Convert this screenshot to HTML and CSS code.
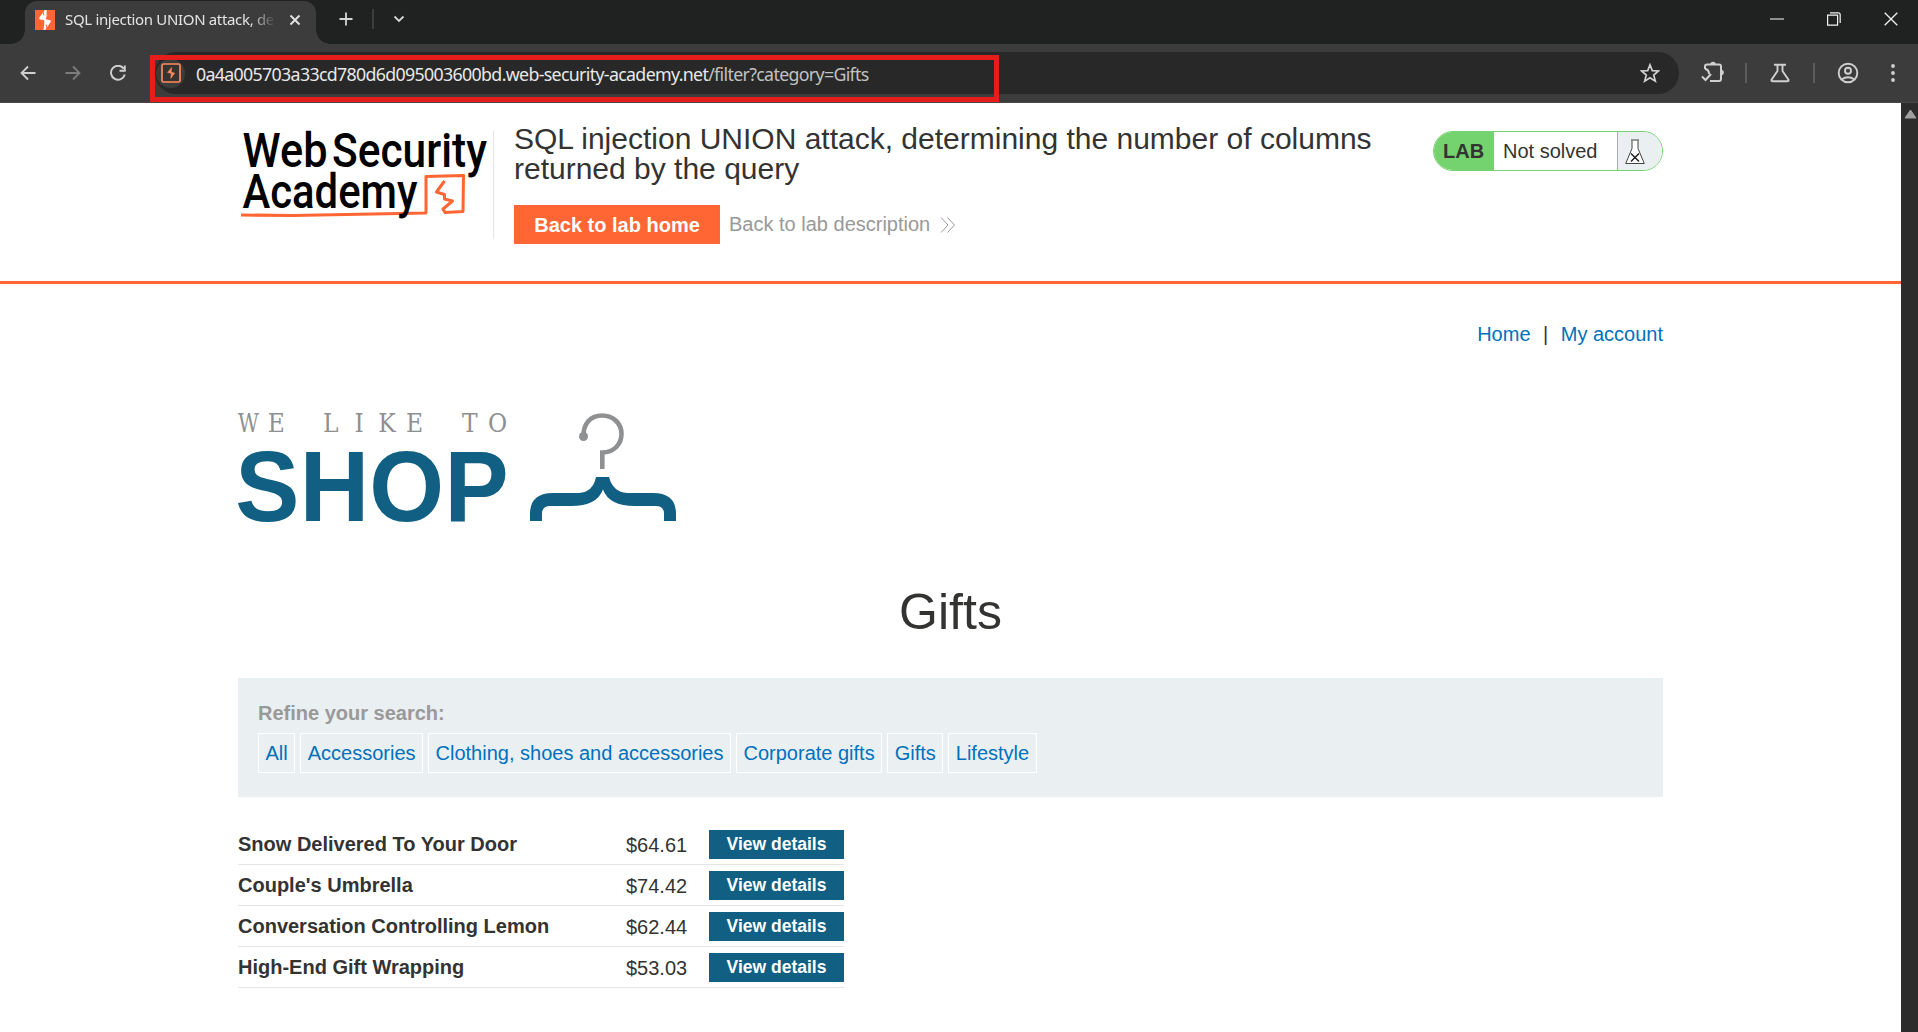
FILE: index.html
```html
<!DOCTYPE html>
<html lang="en">
<head>
<meta charset="utf-8">
<title>SQL injection UNION attack, determining the number of columns returned by the query</title>
<link rel="stylesheet" href="styles.css">
</head>
<body>
<div class="browser">
  <div class="tabstrip">
    <div class="tab">
      <svg class="favicon" width="20" height="20" viewBox="0 0 20 20"><rect width="20" height="20" fill="#f63"/><path d="M9.800 0 4.300 7.500v1.700l5 1v3l-.8 6.800h1.800l5.400-8.200v-1.600l-5-1 .9-3V0z" fill="#fff"/><path d="M7.500 0 9 5.500M12.500 20 11 14.500" stroke="#f63" stroke-width="1"/></svg>
      <span class="tab-title">SQL injection UNION attack, determining</span>
      <svg class="tab-close" width="12" height="12" viewBox="0 0 12 12"><path d="m1.500 1.500 9 9m0-9-9 9" stroke="#e3e3e3" stroke-width="1.900"/></svg>
    </div>
    <svg class="new-tab" width="14" height="14" viewBox="0 0 14 14"><path d="M7 .5v13M.5 7h13" stroke="#d5d5d5" stroke-width="1.800"/></svg>
    <span class="strip-line"></span>
    <svg class="tab-menu" width="12" height="8" viewBox="0 0 12 8"><path d="m1.500 1.500 4.500 4.500 4.500-4.500" stroke="#d5d5d5" stroke-width="1.800" fill="none"/></svg>
    <div class="window-buttons">
      <svg width="14" height="14" viewBox="0 0 14 14"><path d="M0 7h14" stroke="#aaa" stroke-width="1.600"/></svg>
      <svg width="14" height="14" viewBox="0 0 14 14"><path d="M.6 3.200h10v10H.6zM3 .8h8.200q2 0 2 2V11" stroke="#f2f2f2" stroke-width="1.200" fill="none"/></svg>
      <svg width="14" height="14" viewBox="0 0 14 14"><path d="m.7.700 12.600 12.600m0-12.600L.7 13.300" stroke="#f2f2f2" stroke-width="1.300"/></svg>
    </div>
  </div>
  <div class="toolbar">
    <svg class="back" width="16" height="16" viewBox="0 0 16 16"><path d="M15.500 8H2M8 1.500 1.500 8 8 14.500" stroke="#d0d0d0" stroke-width="1.800" fill="none"/></svg>
    <svg class="forward" width="16" height="16" viewBox="0 0 16 16"><path d="M.5 8H14M8 1.500 14.500 8 8 14.500" stroke="#7c7c7c" stroke-width="1.800" fill="none"/></svg>
    <svg class="reload" width="16" height="16" viewBox="0 0 16 16"><path d="M13.700 3.600A7 7 0 1 0 14.800 9.500M14.800.5v5.300H9.500" stroke="#d0d0d0" stroke-width="1.900" fill="none"/></svg>
    <div class="omnibox">
      <span class="site-icon"><svg width="20" height="20" viewBox="0 0 20 20"><rect x="1" y="1" width="18" height="18" rx="1.500" fill="#363331" stroke="#ff8a5c" stroke-width="1.700"/><path d="M10.700 4.500 6.500 9.500l3.800 1-.6 5 4-5.300-3.500-1.200z" fill="#ff8a5c" stroke="#ff8a5c" stroke-width=".5"/></svg></span>
      <span class="url"><span class="host">0a4a005703a33cd780d6d095003600bd.web-security-academy.net</span><span class="path">/filter?category=Gifts</span></span>
      <svg class="star" width="20" height="20" viewBox="0 0 20 20"><path d="m10 1.800 2.300 5.800 6.200.4-4.800 4 1.600 6.100-5.300-3.400-5.300 3.400 1.600-6.100-4.800-4 6.200-.4z" stroke="#d0d0d0" stroke-width="1.700" fill="none"/></svg>
    </div>
    <svg class="extensions" width="24" height="22" viewBox="0 0 24 22"><path d="M4 8V5.500q0-2 2-2h12q2 0 2 2v12.500q0 2-2 2H9M4 8q4 .5 4 5" fill="none" stroke="#d0d0d0" stroke-width="2"/><path d="M9.200 3.500a2.800 2.800 0 0 1 5.600 0zM20 8.700a2.800 2.800 0 0 1 0 5.600z" fill="#d0d0d0"/><path d="m1 15.500 3.500 3.500L10 13" fill="none" stroke="#d0d0d0" stroke-width="2"/></svg>
    <span class="tool-line"></span>
    <svg class="labs" width="20" height="20" viewBox="0 0 20 20"><path d="M4 1.700h12M7.500 2v6L1.700 16.500q-.8 1.800 1 1.800h14.600q1.800 0 1-1.800L12.500 8V2" stroke="#d0d0d0" stroke-width="1.900" fill="none"/></svg>
    <span class="tool-line second"></span>
    <svg class="profile" width="22" height="22" viewBox="0 0 22 22"><g stroke="#d0d0d0" stroke-width="1.900" fill="none"><circle cx="11" cy="11" r="9.300"/><circle cx="11" cy="8.700" r="3"/><path d="M4.500 17.500q6.500-4.500 13 0"/></g></svg>
    <svg class="more" width="4" height="18" viewBox="0 0 4 18"><g fill="#d0d0d0"><circle cx="2" cy="2" r="1.900"/><circle cx="2" cy="9" r="1.900"/><circle cx="2" cy="16" r="1.900"/></g></svg>
    <div class="highlight"></div>
  </div>
</div>
<div class="viewport">
  <div class="page">
    <header class="lab-header">
      <div class="container header-row">
        <svg class="academy" width="255" height="90" viewBox="0 0 255 90">
          <g class="academy-text">
            <text x="4.500" y="36" textLength="85" lengthAdjust="spacingAndGlyphs">Web</text>
            <text x="94" y="36" textLength="155" lengthAdjust="spacingAndGlyphs">Security</text>
          </g>
          <path d="M3 84 55 84.500 188 82V45.500L225.500 44.500 225 80.500 207 81.500 205 78 214.500 70 206.500 68V63.500L198.500 61 206.500 50" class="sketch"/>
          <g class="academy-text"><text x="4.500" y="77" textLength="175" lengthAdjust="spacingAndGlyphs">Academy</text></g>
        </svg>
        <div class="title-area">
          <h2>SQL injection UNION attack, determining the number of columns returned by the query</h2>
          <div class="actions">
            <a class="home-button">Back to lab home</a>
            <a class="description">Back to lab description <svg width="16" height="16" viewBox="0 0 16 16"><path d="m1 .5 7 7.500-7 7.500m6.500-15 7 7.500-7 7.500" fill="none" stroke="#999" stroke-width="1"/></svg></a>
          </div>
        </div>
        <div class="status">
          <b>LAB</b><span>Not solved</span>
          <i><svg width="20" height="26" viewBox="0 0 20 26"><path d="M6 1h8M7 1.500v8L.7 24.500h18.600L13 9.500v-8" fill="#fff" stroke="#444" stroke-width="1"/><path d="m6 14.500 8 8m0-8-8 8" stroke="#222" stroke-width="1.500"/></svg></i>
        </div>
      </div>
    </header>
    <main class="container">
      <nav><a>Home</a><span>|</span><a>My account</a></nav>
      <svg class="shop" width="440" height="120" viewBox="0 0 440 120">
        <text class="like" transform="translate(10.500 22) scale(.78 1)">W</text>
        <g transform="translate(0 22) scale(.9 1)"><text class="like" y="0" x="42.500 103 134.500 165.500 196.200 257.700 288.500">ELIKETO</text></g>
        <text class="word" transform="translate(-2.700 111.300) scale(.952 1)" textLength="287">SHOP</text>
        <circle cx="345.500" cy="26.500" r="4.500" fill="#8f9091"/>
        <path d="M345.500 27C345 13 353 5.500 364 5.500C376 5.500 383.500 14 383.500 24C383.500 34 376 42.500 364.300 42.500V59" fill="none" stroke="#8f9091" stroke-width="4.600"/>
        <path d="M358 67H371Q375 82 389 83H413Q438 82 438 104V111H426V104Q426 96 418 96H397Q371 96 365 79.500Q359 96 333 96H312Q304 96 304 104V111H292V104Q292 82 317 83H341Q355 82 358 67Z" fill="#115f83"/>
      </svg>
      <h1>Gifts</h1>
      <section class="filters">
        <label>Refine your search:</label>
        <div class="chips"><a>All</a><a>Accessories</a><a>Clothing, shoes and accessories</a><a>Corporate gifts</a><a>Gifts</a><a>Lifestyle</a></div>
      </section>
      <section class="products">
        <div class="product"><b>Snow Delivered To Your Door</b><span>$64.61</span><a>View details</a></div>
        <div class="product"><b>Couple's Umbrella</b><span>$74.42</span><a>View details</a></div>
        <div class="product"><b>Conversation Controlling Lemon</b><span>$62.44</span><a>View details</a></div>
        <div class="product"><b>High-End Gift Wrapping</b><span>$53.03</span><a>View details</a></div>
      </section>
    </main>
  </div>
  <div class="scrollbar"><svg width="13" height="10" viewBox="0 0 13 10"><path d="M6.500 1 12 9H1z" fill="#a0a0a0" stroke="#a0a0a0" stroke-linejoin="round"/></svg></div>
</div>
</body>
</html>
```
FILE: styles.css
```css
* { box-sizing: border-box; }
body { margin: 0; height: 1032px; overflow: hidden; display: flex; flex-direction: column; background: #fff; color: #333332; font: 20px/25px "Liberation Sans", Arial, sans-serif; }
svg { display: block; flex: none; }
.browser { flex: none; font-family: "Noto Sans", sans-serif; }
.tabstrip { height: 44px; background: #202221; display: flex; align-items: center; padding-left: 25px; }
.tab { position: relative; width: 291px; height: 43px; align-self: flex-end; background: #3c3c3c; border-radius: 12px 12px 0 0; display: flex; align-items: center; padding: 0 15px 6px 10px; }
.tab::before, .tab::after { content: ""; position: absolute; bottom: 0; width: 14px; height: 14px; }
.tab::before { right: 100%; background: radial-gradient(circle at 0 0, transparent 13.500px, #3c3c3c 14px); }
.tab::after { left: 100%; background: radial-gradient(circle at 100% 0, transparent 13.500px, #3c3c3c 14px); }
.tab-title { margin-left: 10px; width: 211px; overflow: hidden; white-space: nowrap; font-size: 15px; letter-spacing: -.33px; color: #e3e3e3; -webkit-mask-image: linear-gradient(90deg, #000 185px, transparent 211px); mask-image: linear-gradient(90deg, #000 185px, transparent 211px); }
.tab-close { margin-left: 14px; }
.new-tab { margin: -6px 0 0 23px; }
.strip-line { width: 2px; height: 20px; margin: -6px 0 0 19px; background: #3c3d3d; }
.tab-menu { margin: -6px 0 0 19px; }
.window-buttons { margin: -7px 20px 0 auto; display: flex; gap: 43px; }
.toolbar { position: relative; height: 59px; background: #3c3c3c; display: flex; align-items: center; padding: 0 23px 0 20px; border-bottom: 1px solid #484848; }
.forward { margin-left: 29px; }
.reload { margin-left: 29px; }
.omnibox { margin-left: 29px; width: 1525px; height: 42px; border-radius: 21px; background: #282828; display: flex; align-items: center; padding: 0 19px 0 1px; }
.site-icon { width: 29px; height: 29px; border-radius: 50%; background: #3c3c3c; display: grid; place-items: center; }
.url { margin: 1px 0 0 11px; font-size: 17.800px; line-height: 24px; letter-spacing: -.67px; white-space: nowrap; color: #e8e8e8; }
.path { color: #c2c2c2; }
.star { margin-left: auto; }
.extensions { margin: -2px 0 0 22px; }
.tool-line { width: 2px; height: 20px; background: #5c5c5c; margin-left: 20px; }
.labs { margin-left: 23px; }
.tool-line.second { margin-left: 23px; }
.profile { margin-left: 22px; }
.more { margin-left: 32px; }
.highlight { position: absolute; left: 150px; top: 11px; width: 849px; height: 47px; border: 5px solid #e71d1c; }
.viewport { flex: 1; display: flex; min-height: 0; }
.page { width: 1901px; }
.scrollbar { width: 17px; background: #2c2c2c; padding: 6px 0 0 3px; }
.container { width: 1425px; margin: 0 auto; }
.lab-header { height: 181px; border-bottom: 3px solid #f63; padding-top: 28px; }
.header-row { display: flex; align-items: flex-start; }
.academy { overflow: visible; }
.academy-text { font: 500 48.500px Roboto, sans-serif; fill: #000; }
.sketch { fill: none; stroke: #f63; stroke-width: 3; stroke-linejoin: round; }
.title-area { height: 108px; border-left: 1px solid #e5e5e5; padding-left: 20px; width: 920px; }
h2 { margin: -7px 0 0; font-size: 30px; line-height: 30px; font-weight: 400; width: 880px; }
.actions { margin-top: 21px; display: flex; align-items: center; gap: 9px; }
.home-button { width: 206px; height: 39px; line-height: 40px; background: #f63; color: #fff; font-weight: 700; text-align: center; }
.description { color: #999; display: flex; align-items: center; gap: 10px; line-height: 27px; }
.status { margin-left: auto; width: 230px; height: 40px; border: 1px solid #74d36e; border-radius: 20px; overflow: hidden; display: flex; line-height: 39px; }
.status b { width: 60px; background: #74d36e; padding-left: 9px; }
.status span { width: 123px; padding-left: 9px; }
.status i { flex: 1; border-left: 1px solid #74d36e; background: #eaeff2; padding: 7px 0 0 7px; }
nav { display: flex; justify-content: flex-end; margin-top: 38px; gap: 12.500px; }
a { color: #0071bd; }
.shop { margin-top: 63px; overflow: visible; }
.like { font: 26px "DejaVu Serif", serif; fill: #8f9091; text-anchor: middle; }
.word { font: 700 101px "Liberation Sans", Arial, sans-serif; fill: #115f83; }
h1 { margin: 52px 0 0; font-size: 50px; line-height: 60px; font-weight: 400; text-align: center; }
.filters { margin-top: 36px; height: 119px; background: #eaeff2; padding: 23px 20px 0; }
.filters label { display: block; font-weight: 700; color: #999; }
.chips { display: flex; gap: 5px; margin-top: 7px; }
.chips a { border: 1px solid #fff; height: 40px; line-height: 38px; padding: 0 6.500px; }
.products { width: 606px; margin-top: 27px; }
.product { height: 41px; border-bottom: 1px solid #e5e5e5; display: grid; grid-template-columns: 388px 83px 135px; align-items: center; }
.product b { white-space: nowrap; }
.product span { padding-top: 2px; }
.home-button, .product a { color: #fff; }
.actions .description { color: #999; }
.product a { height: 29px; line-height: 28px; background: #115f83; text-align: center; font-size: 17.500px; font-weight: 700; }
```
